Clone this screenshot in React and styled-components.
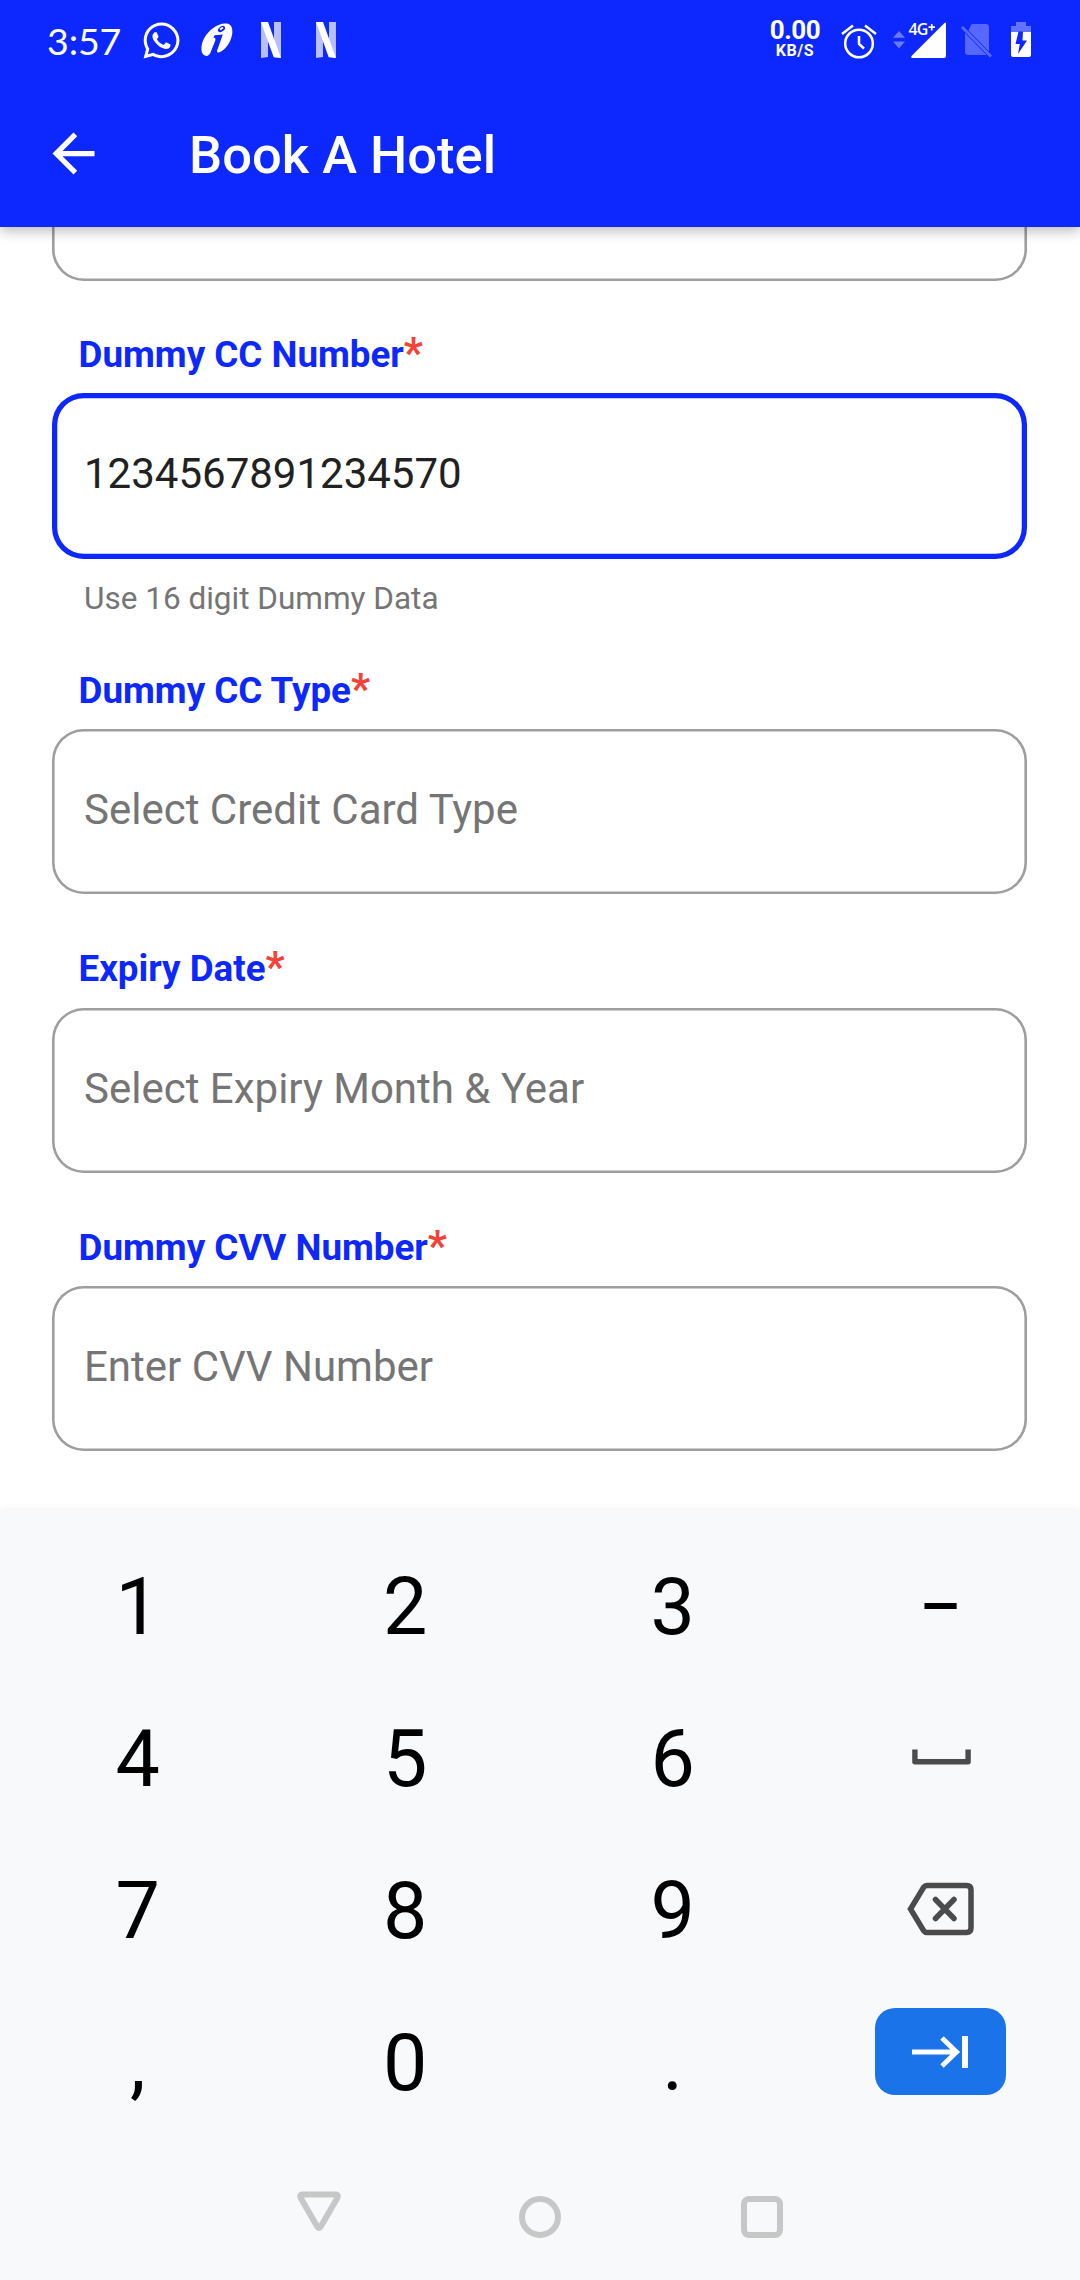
import React from "react";
import styled, { createGlobalStyle } from "styled-components";
import { FaWhatsapp } from "react-icons/fa";

const GlobalStyle = createGlobalStyle`
  *, *::before, *::after { box-sizing: border-box; }
  body { margin: 0; background: #ffffff; font-family: Roboto, "Noto Sans", sans-serif; }
`;

const BLUE = "#0d28ff";

const Screen = styled.div`
  width: 1080px;
  height: 2280px;
  display: flex;
  flex-direction: column;
  overflow: hidden;
  background: #ffffff;
`;

const Header = styled.header`
  flex: none;
  z-index: 1;
  height: 227px;
  background: ${BLUE};
  color: #ffffff;
  box-shadow: 0 4px 12px rgba(0, 0, 0, 0.27);
`;

const StatusBar = styled.div`
  height: 80px;
  display: flex;
  justify-content: space-between;
  padding: 0 49px 0 47px;
`;

const StatusGroup = styled.div`
  display: flex;
  align-items: flex-start;
`;

const Clock = styled.span`
  width: 96px;
  padding-top: 18px;
  font: 400 37.5px/45px Lato, sans-serif;
  letter-spacing: -0.1px;
`;

const Glyph = styled.svg`
  display: block;
  flex: none;
  width: ${(p) => p.$w}px;
  height: ${(p) => p.$h}px;
  margin-top: ${(p) => p.$top || 0}px;
  margin-left: ${(p) => p.$left || 0}px;
`;

const ChatIcon = styled(FaWhatsapp)`
  width: 41px;
  height: 41px;
  margin: 19.5px 0 0 -2.5px;
`;

const NetSpeed = styled.div`
  display: flex;
  flex-direction: column;
  align-items: center;
  width: 50px;
  padding: 16px 1px 0 0;
  font-weight: 700;
`;

const SpeedValue = styled.span`
  font-size: 26px;
  line-height: 28px;
  letter-spacing: -0.5px;
`;

const SpeedUnit = styled.span`
  font-size: 16px;
  line-height: 14px;
  letter-spacing: 0.6px;
`;

const Signal = styled.div`
  position: relative;
  width: 42px;
  height: 60px;
`;

const NetworkType = styled.span`
  position: absolute;
  top: 19px;
  left: 4px;
  font: 600 16px/20px "Open Sans", sans-serif;
  letter-spacing: -1px;
`;

const Toolbar = styled.div`
  display: flex;
  align-items: center;
  height: 147px;
  padding-left: 42px;
`;

const Title = styled.h1`
  margin: 0 0 0 84px;
  font-size: 52.5px;
  line-height: 62px;
  font-weight: 500;
  letter-spacing: 0;
  padding-top: 2px;
`;

const Form = styled.main`
  flex: none;
  height: 1283px;
  padding: 0 53px 0 52px;
  overflow: hidden;
`;

const Box = styled.div`
  height: ${(p) => (p.$focused ? 166 : 165)}px;
  padding: 56px 32px 0;
  border-radius: 31.5px;
  box-shadow: inset 0 0 0 ${(p) => (p.$focused ? 5.25 : 2.6)}px ${(p) => (p.$focused ? BLUE : "#9e9e9e")};
  font-size: 42px;
  line-height: 50px;
  color: ${(p) => (p.$focused ? "#212121" : "#757575")};
  white-space: nowrap;
`;

const ClippedBox = styled(Box)`
  margin-top: -111px;
`;

const Label = styled.div`
  height: ${(p) => p.$h}px;
  padding: ${(p) => (p.$h > 112 ? 53 : 52)}px 0 0 26.5px;
  font-size: 36.75px;
  line-height: 44px;
  font-weight: 700;
  color: ${BLUE};
`;

const Star = styled.span`
  font-size: 42px;
  line-height: 0;
  font-weight: 700;
  color: #f44336;
`;

const Helper = styled.div`
  height: 57px;
  padding: 21px 32px 0;
  font-size: 31.5px;
  line-height: 38px;
  color: #757575;
`;

const Keyboard = styled.section`
  flex: 1;
  display: flex;
  flex-direction: column;
  background: #f8f9fb;
  box-shadow: 0 0 7px rgba(0, 0, 0, 0.07);
`;

const Keys = styled.div`
  display: grid;
  grid-template-columns: repeat(4, 267.5px);
  grid-auto-rows: 152px;
  padding: 19px 0 0 4px;
`;

const Key = styled.div`
  display: flex;
  align-items: center;
  justify-content: center;
  font-size: 79px;
  line-height: 92px;
  color: #000000;
`;

const TextKey = styled(Key)`
  padding-top: 4px;
`;

const NextKey = styled.div`
  display: flex;
  align-items: center;
  justify-content: center;
  width: 131px;
  height: 87px;
  margin-bottom: 19px;
  border-radius: 20px;
  background: #1a73e8;
`;

const NavBar = styled.nav`
  display: flex;
  padding: 50px 0 0 297px;
`;

const fields = [
  { label: "Dummy CC Number", text: "1234567891234570", focused: true, helper: "Use 16 digit Dummy Data", h: 112 },
  { label: "Dummy CC Type", text: "Select Credit Card Type", h: 113 },
  { label: "Expiry Date", text: "Select Expiry Month & Year", h: 114 },
  { label: "Dummy CVV Number", text: "Enter CVV Number", h: 113 },
];

const NIcon = ({ left }) => (
  <Glyph $w={20} $h={36} $top={22} $left={left} viewBox="0 0 20 36" fill="#fff">
    <path d="M0 0H7V35L0 36Z M13 0H20V36L13 35Z" opacity=".7" />
    <path d="M0 0H7L20 36C17.500 35.500 15 35.300 12.700 35.200L0 0Z" />
  </Glyph>
);

const Status = () => (
  <StatusBar>
    <StatusGroup>
      <Clock>3:57</Clock>
      <ChatIcon />
      <Glyph $w={32} $h={34} $top={23} $left={19} viewBox="0 0 32 34">
        <path d="M27 .8C31 2 32 6.500 31 12C29.500 20 24 27 18.500 29.300C16.500 30.200 15.500 29 16.300 27L21.800 11.500L13.500 12.200L12.500 14.800C14.500 14.700 14.800 16 14.200 17.800L9.500 29.500C8.300 32.800 5 34 2.500 31.800C-.5 29-.3 22 3 15.500C8 6 19-1.300 27 .8Z" fill="#fff" />
        <ellipse cx="20.500" cy="6" rx="4" ry="2.500" transform="rotate(-35 20.500 6)" fill={BLUE} />
        <path d="M19 6.500L22 4.500" stroke="#fff" strokeWidth="1.800" />
      </Glyph>
      <NIcon left={28.5} />
      <NIcon left={35} />
    </StatusGroup>
    <StatusGroup>
      <NetSpeed>
        <SpeedValue>0.00</SpeedValue>
        <SpeedUnit>KB/S</SpeedUnit>
      </NetSpeed>
      <Glyph $w={36} $h={36} $top={23} $left={20} viewBox="0 0 36 36" fill="none" stroke="#fff" strokeWidth="2.500">
        <circle cx="18" cy="20.500" r="13.800" />
        <path d="M18 13V21L23 25.500M1 11L12 2.500M35 11L24 2.500" />
      </Glyph>
      <Glyph $w={12} $h={18} $top={31} $left={16} viewBox="0 0 12 18" fill="#fff" opacity=".38">
        <path d="M6 0L12 6.700H0ZM0 10.500H12L6 17.500Z" />
      </Glyph>
      <Signal>
        <NetworkType>4G</NetworkType>
        <Glyph $w={39} $h={38} $top={21} $left={3} viewBox="0 0 39 38" fill="#fff">
          <path d="M38 2V35Q38 37 36 37H4Q2.500 36.500 3.500 35L36.500 2Q37.500 1 38 2Z" />
          <path d="M20.500 6.200H27M23.750 3V9.500" stroke="#fff" strokeWidth="1.700" />
        </Glyph>
      </Signal>
      <Glyph $w={32} $h={36} $top={23} $left={14} viewBox="0 0 32 36">
        <path d="M12 1H25Q28 1 28 4V28.500L7.500 7.500L10 2Q10.500 1 12 1ZM4 10L25.500 32H7Q4 32 4 29Z" fill="#fff" opacity=".3" />
        <path d="M1 4L30 33.500" stroke="#5668ff" strokeWidth="2.800" />
      </Glyph>
      <Glyph $w={20} $h={36} $top={22} $left={18.5} viewBox="0 0 20 36" fill="#fff">
        <path d="M5 0H15V4H20V10H0V4H5Z" opacity=".35" />
        <path d="M0 10H20V33Q20 35 18 35H2Q0 35 0 33Z" />
        <path d="M7.500 9.500H12L11.500 18.500H16L7 32L8.800 22H4.500Z" fill={BLUE} />
      </Glyph>
    </StatusGroup>
  </StatusBar>
);

export default function App() {
  return (
    <Screen>
      <GlobalStyle />
      <Header>
        <Status />
        <Toolbar>
          <Glyph $w={63} $h={63} viewBox="0 0 24 24" fill="#fff">
            <path d="M20 11H7.830l5.590-5.590L12 4l-8 8 8 8 1.410-1.410L7.830 13H20v-2z" />
          </Glyph>
          <Title>Book A Hotel</Title>
        </Toolbar>
      </Header>
      <Form>
        <ClippedBox />
        {fields.map((f) => (
          <React.Fragment key={f.label}>
            <Label $h={f.h}>
              {f.label}
              <Star>*</Star>
            </Label>
            <Box $focused={f.focused}>{f.text}</Box>
            {f.helper && <Helper>{f.helper}</Helper>}
          </React.Fragment>
        ))}
      </Form>
      <Keyboard>
        <Keys>
          <TextKey>1</TextKey>
          <TextKey>2</TextKey>
          <TextKey>3</TextKey>
          <TextKey>−</TextKey>
          <TextKey>4</TextKey>
          <TextKey>5</TextKey>
          <TextKey>6</TextKey>
          <Key>
            <Glyph $w={59} $h={16} $left={2} viewBox="0 0 59 16">
              <path d="M2.900 .5V12.700H56.100V.5" fill="none" stroke="#4b4b4b" strokeWidth="5.400" strokeLinejoin="round" />
            </Glyph>
          </Key>
          <TextKey>7</TextKey>
          <TextKey>8</TextKey>
          <TextKey>9</TextKey>
          <Key>
            <Glyph $w={67} $h={54} $left={0} viewBox="0 0 67 54" fill="none" stroke="#4b4b4b" strokeWidth="5.500">
              <path d="M20 3.500H59.500Q64 3.500 64 8V46Q64 50.500 59.500 50.500H20Q18 50.500 16.500 48.500L3.500 27L16.500 5.500Q18 3.500 20 3.500Z" />
              <path d="M28.500 17.500L47 36.500M47 17.500L28.500 36.500" strokeLinecap="round" />
            </Glyph>
          </Key>
          <TextKey>,</TextKey>
          <TextKey>0</TextKey>
          <TextKey>.</TextKey>
          <Key>
            <NextKey>
              <Glyph $w={57} $h={32} viewBox="0 0 57 32" fill="none" stroke="#fff">
                <path d="M0 16H44M30 2L44.500 16L30 30" strokeWidth="5" />
                <path d="M53 0V32" strokeWidth="6" />
              </Glyph>
            </NextKey>
          </Key>
        </Keys>
        <NavBar>
          <Glyph $w={44} $h={42} $top={4} viewBox="0 0 44 42" fill="none" stroke="#c6c8c8" strokeWidth="6">
            <path d="M5 3.500H39Q42 4 40 7.500L23.500 36Q22 38 20.500 36L4 7.500Q2 4 5 3.500Z" />
          </Glyph>
          <Glyph $w={42} $h={42} $top={9} $left={178} viewBox="0 0 42 42" fill="none" stroke="#c6c8c8" strokeWidth="6">
            <circle cx="21" cy="21" r="18" />
          </Glyph>
          <Glyph $w={42} $h={42} $top={9} $left={180} viewBox="0 0 42 42" fill="none" stroke="#c6c8c8" strokeWidth="6">
            <rect x="3" y="3" width="36" height="36" rx="5" />
          </Glyph>
        </NavBar>
      </Keyboard>
    </Screen>
  );
}
